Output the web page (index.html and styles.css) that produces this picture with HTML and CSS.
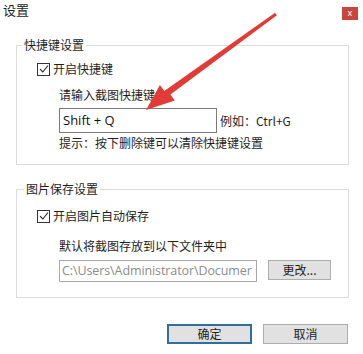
FILE: index.html
```html
<!DOCTYPE html>
<html lang="zh-CN">
<head>
    <meta charset="UTF-8">
    <meta name="viewport" content="width=device-width, initial-scale=1.0">
    <title>设置</title>
    <link rel="stylesheet" href="styles.css">
</head>
<body>
    <div class="titlebar">
        <span class="title">设置</span>
        <span class="close">x</span>
    </div>

    <fieldset class="group group-hotkey">
        <legend>快捷键设置</legend>
        <div class="check-row">
            <span class="checkbox">
                <svg width="10" height="10" viewBox="0 0 10 10"><path d="M1 5.2 L3.8 8 L9 1.5" fill="none" stroke="#222" stroke-width="1.1"/></svg>
            </span>
            <span>开启快捷键</span>
        </div>
        <div class="indent label-row">请输入截图快捷键</div>
        <div class="indent input-row">
            <div class="hotkey-input">Shift + Q</div>
            <span class="example">例如：Ctrl+G</span>
        </div>
        <div class="indent hint-row">提示：按下删除键可以清除快捷键设置</div>
    </fieldset>

    <fieldset class="group group-save">
        <legend>图片保存设置</legend>
        <div class="check-row">
            <span class="checkbox">
                <svg width="10" height="10" viewBox="0 0 10 10"><path d="M1 5.2 L3.8 8 L9 1.5" fill="none" stroke="#222" stroke-width="1.1"/></svg>
            </span>
            <span>开启图片自动保存</span>
        </div>
        <div class="indent label-row save-label">默认将截图存放到以下文件夹中</div>
        <div class="indent path-row">
            <div class="path-input"><span class="path-text">C:\Users\Administrator\Documer</span></div>
            <button class="btn btn-change">更改...</button>
        </div>
    </fieldset>

    <div class="actions">
        <button class="btn btn-ok">确定</button>
        <button class="btn btn-cancel">取消</button>
    </div>

    <!-- annotation arrow drawn over the dialog -->
    <svg class="arrow" width="363" height="354" viewBox="0 0 363 354">
        <polygon points="276.9,15.2 170.4,94.4 174.8,100.6 146,110 159.9,84.9 164.3,91.1 275.1,12.8" fill="#e23b36"/>
    </svg>
</body>
</html>
```

FILE: styles.css
```css
* {
    box-sizing: border-box;
}

body {
    margin: 0;
    width: 363px;
    height: 354px;
    background-color: #ffffff;
    color: #1e1e1e;
    font-family: "Noto Sans CJK SC", "Noto Sans", sans-serif;
    font-size: 12px;
    line-height: 14px;
    position: relative;
    overflow: hidden;
}

.titlebar {
    display: flex;
    justify-content: space-between;
    padding: 3px 5px 0 3px;
    height: 38px;
}

.title {
    font-size: 13px;
}

.close {
    width: 16px;
    height: 13px;
    margin-top: 4px;
    background-color: #c8473c;
    color: #ffffff;
    font-family: "Noto Sans", sans-serif;
    font-size: 9px;
    line-height: 12px;
    text-align: center;
}

.group {
    margin: 0 14px 0 16px;
    padding: 0;
    min-width: 0;
    border: 1px solid #dcdcdc;
}

.group legend {
    margin-left: 5px;
    padding: 0 2px;
    line-height: 14px;
}

.group-hotkey {
    padding-bottom: 14px;
}

.group-save {
    margin-top: 17px;
    padding-bottom: 15px;
}

.group-save legend {
    margin-left: 7px;
}

.check-row {
    display: flex;
    align-items: center;
    padding-left: 20px;
    margin-top: 10px;
}

.group-save .check-row {
    margin-top: 13px;
}

.checkbox {
    width: 13px;
    height: 13px;
    border: 1px solid #333333;
    display: flex;
    align-items: center;
    justify-content: center;
    margin-right: 3px;
}

.indent {
    padding-left: 42px;
}

.label-row {
    margin-top: 12px;
}

.save-label {
    margin-top: 16px;
}

.input-row {
    display: flex;
    align-items: center;
    margin-top: 6px;
}

.hotkey-input {
    width: 158px;
    height: 25px;
    border: 1px solid #7a7a7a;
    padding-left: 3px;
    font-family: "Open Sans", "Noto Sans", sans-serif;
    font-size: 13px;
    line-height: 23px;
    color: #111111;
}

.example {
    margin-left: 3px;
    font-size: 12px;
}

.hint-row {
    margin-top: 3px;
}

.path-row {
    display: flex;
    align-items: flex-start;
    margin-top: 7px;
}

.path-input {
    width: 198px;
    height: 22px;
    border: 1px solid #a8a8a8;
    padding-left: 2px;
    font-family: "Open Sans", "Noto Sans", sans-serif;
    font-size: 12.5px;
    line-height: 20px;
    color: #8c8c8c;
    white-space: nowrap;
    overflow: hidden;
}

.path-text {
    letter-spacing: -0.1px;
}

.btn {
    font-family: "Noto Sans CJK SC", sans-serif;
    font-size: 12px;
    line-height: 14px;
    color: #1e1e1e;
    background-color: #e1e1e1;
    border: 1px solid #adadad;
    padding: 0;
}

.btn-change {
    width: 63px;
    height: 20px;
    margin-left: 11px;
}

.actions {
    display: flex;
    justify-content: flex-end;
    gap: 11px;
    margin: 26px 15px 0 0;
}

.btn-ok,
.btn-cancel {
    width: 85px;
    height: 20px;
}

.btn-ok {
    border: 2px solid #2f6f9f;
}

.arrow {
    position: absolute;
    top: 0;
    left: 0;
    pointer-events: none;
}
```
